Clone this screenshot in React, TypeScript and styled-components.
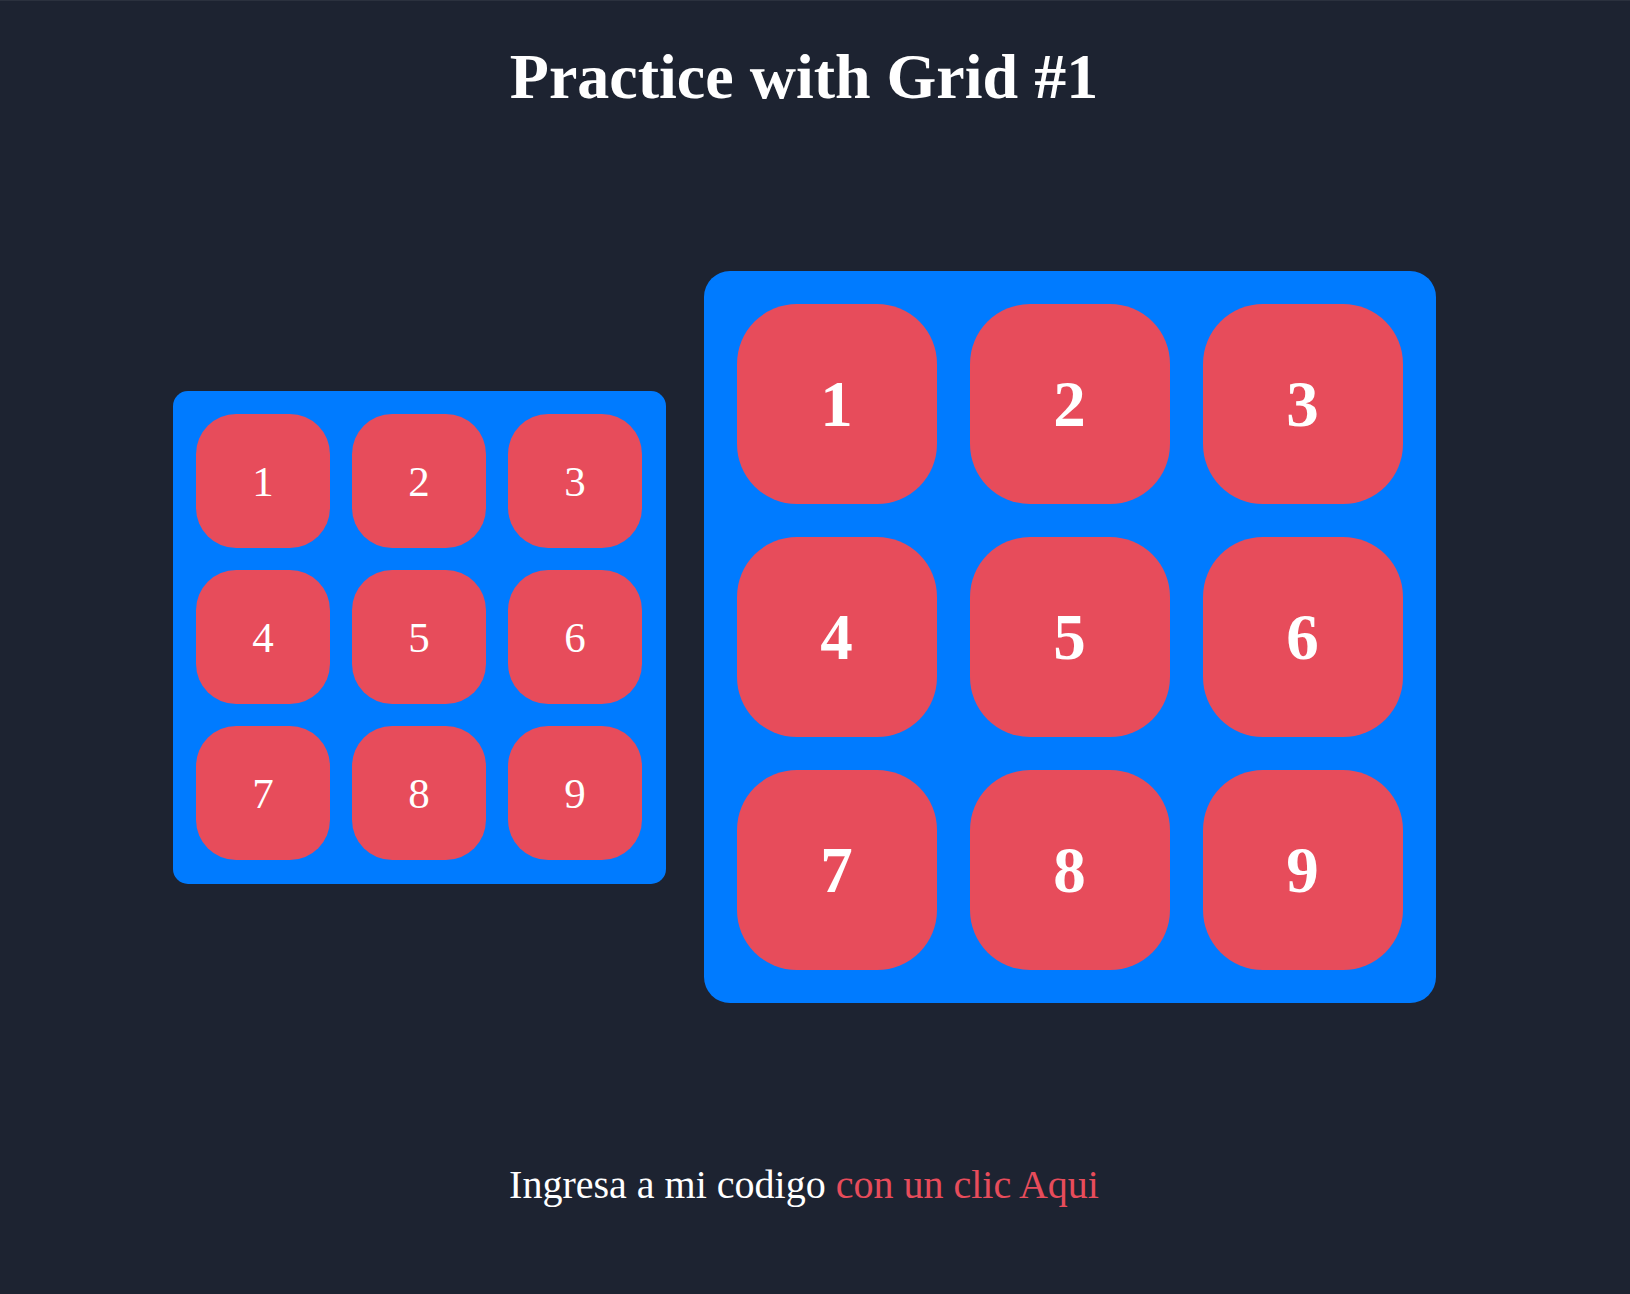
import React from "react";
import styled, { createGlobalStyle } from "styled-components";

const Global = createGlobalStyle`
  html, body {
    margin: 0;
    padding: 0;
    background: #1d2331;
  }
  body {
    border-top: 1px solid #2b313e;
    font-family: "Liberation Serif", "Times New Roman", serif;
    color: #ffffff;
  }
`;

const Page = styled.main`
  display: flex;
  flex-direction: column;
  align-items: center;
  padding-right: 22px;
  min-height: 1293px;
  box-sizing: border-box;
`;

const Title = styled.h1`
  margin: 44px 0 0;
  font-size: 64px;
  line-height: 64px;
  font-weight: 700;
  color: #ffffff;
`;

const Row = styled.section`
  display: flex;
  align-items: center;
  gap: 38px;
  margin-top: 162px;
`;

const Grid = styled.div<{ $big?: boolean }>`
  display: grid;
  grid-template-columns: repeat(3, ${(p) => (p.$big ? 200 : 134)}px);
  grid-auto-rows: ${(p) => (p.$big ? 200 : 134)}px;
  gap: ${(p) => (p.$big ? 33 : 22)}px;
  padding: ${(p) => (p.$big ? 33 : 23.5)}px;
  background: #007bff;
  border-radius: ${(p) => (p.$big ? 26 : 15)}px;
`;

const Cell = styled.div<{ $big?: boolean }>`
  display: flex;
  align-items: center;
  justify-content: center;
  background: #e74c5b;
  border-radius: 30%;
  color: #ffffff;
  font-size: ${(p) => (p.$big ? 65 : 43)}px;
  font-weight: ${(p) => (p.$big ? 700 : 400)};
  line-height: 1;
`;

const Footer = styled.p`
  margin: 162px 0 0;
  font-size: 40px;
  line-height: 40px;
  color: #ffffff;
`;

const Link = styled.a`
  color: #e74c5b;
  text-decoration: none;
`;

const nums = [1, 2, 3, 4, 5, 6, 7, 8, 9];

export default function App() {
  return (
    <>
      <Global />
      <Page>
        <Title>Practice with Grid #1</Title>
        <Row>
          <Grid>
            {nums.map((n) => (
              <Cell key={n}>{n}</Cell>
            ))}
          </Grid>
          <Grid $big>
            {nums.map((n) => (
              <Cell key={n} $big>
                {n}
              </Cell>
            ))}
          </Grid>
        </Row>
        <Footer>
          Ingresa a mi codigo <Link href="#">con un clic Aqui</Link>
        </Footer>
      </Page>
    </>
  );
}
